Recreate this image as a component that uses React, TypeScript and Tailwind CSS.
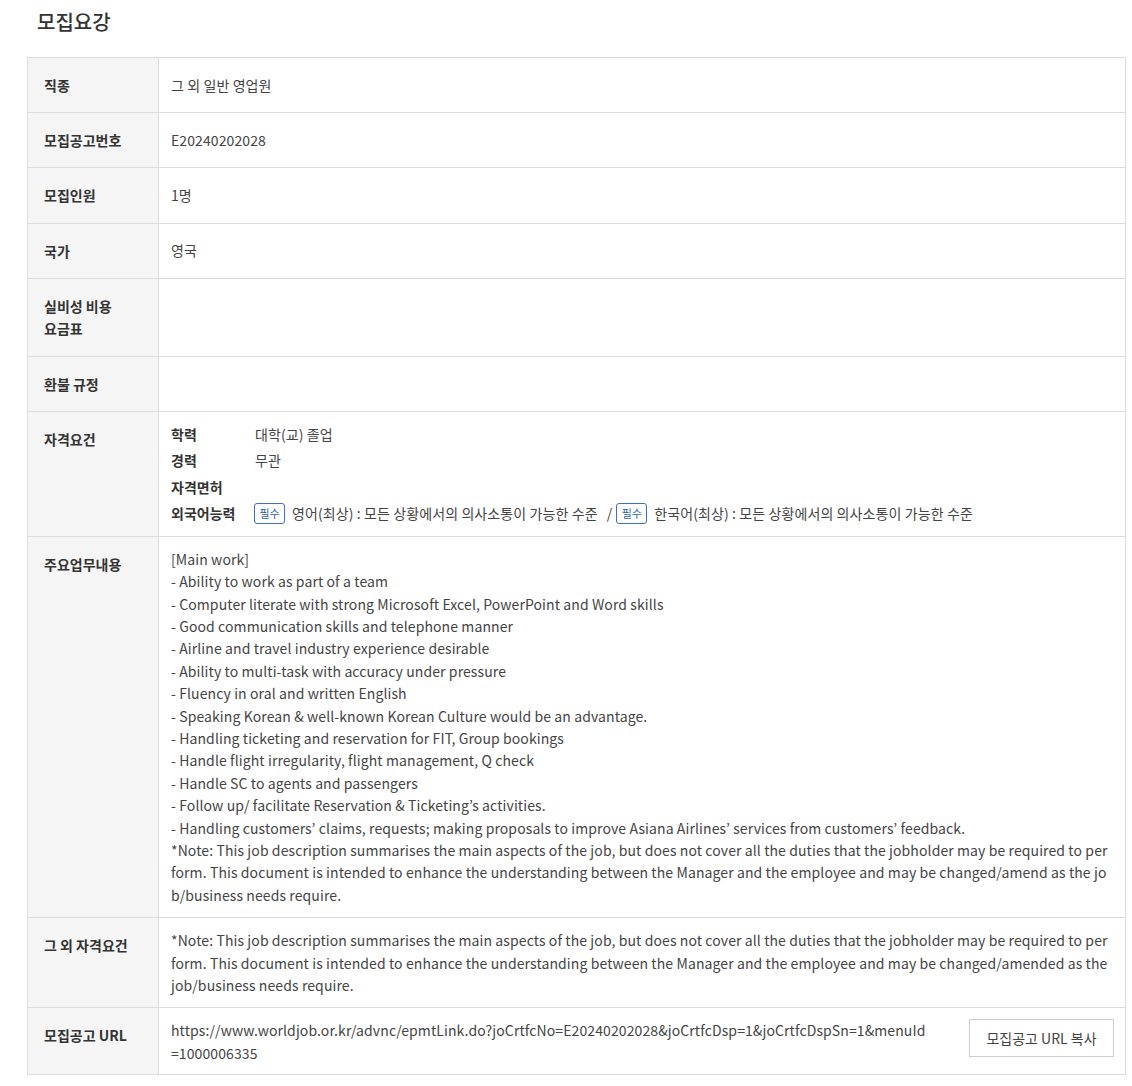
import React from "react";

const font = { fontFamily: '"Noto Sans CJK KR", "Noto Sans", sans-serif' };

function Row({ label, children, contentClass = "" }: { label: React.ReactNode; children?: React.ReactNode; contentClass?: string }) {
  return (
    <div className="flex border-b border-[#dcdcdc]">
      <div className="w-[131px] shrink-0 bg-[#f5f5f5] border-r border-[#dcdcdc] pl-[16px] pr-[8px] pt-[16px] pb-[15.6px] text-[14px] leading-[22.6px] font-bold text-[#333]">
        {label}
      </div>
      <div className={"flex-1 flex items-center px-[12px] text-[14px] leading-[22.4px] tracking-[0.1px] text-[#444] " + (contentClass || "py-[11px]")}>
        {children}
      </div>
    </div>
  );
}

function Badge() {
  return (
    <span className="inline-flex items-center justify-center h-[21px] w-[31px] border border-[#3f6fbf] rounded-[3px] text-[11px] leading-none tracking-normal text-[#2b5fb3] mr-[7px]">
      필수
    </span>
  );
}

const mainWork = [
  "[Main work]",
  "- Ability to work as part of a team",
  "- Computer literate with strong Microsoft Excel, PowerPoint and Word skills",
  "- Good communication skills and telephone manner",
  "- Airline and travel industry experience desirable",
  "- Ability to multi-task with accuracy under pressure",
  "- Fluency in oral and written English",
  "- Speaking Korean & well-known Korean Culture would be an advantage.",
  "- Handling ticketing and reservation for FIT, Group bookings",
  "- Handle flight irregularity, flight management, Q check",
  "- Handle SC to agents and passengers",
  "- Follow up/ facilitate Reservation & Ticketing’s activities.",
  "- Handling customers’ claims, requests; making proposals to improve Asiana Airlines’ services from customers’ feedback.",
  "*Note: This job description summarises the main aspects of the job, but does not cover all the duties that the jobholder may be required to per",
  "form. This document is intended to enhance the understanding between the Manager and the employee and may be changed/amend as the jo",
  "b/business needs require.",
];

const otherReq = [
  "*Note: This job description summarises the main aspects of the job, but does not cover all the duties that the jobholder may be required to per",
  "form. This document is intended to enhance the understanding between the Manager and the employee and may be changed/amended as the",
  "job/business needs require.",
];

function Lines({ lines }: { lines: string[] }) {
  return (
    <div className="flex flex-col">
      {lines.map((l, i) => (
        <div key={i} className="whitespace-nowrap">
          {l}
        </div>
      ))}
    </div>
  );
}

export default function App() {
  return (
    <div className="bg-white w-[1132px] min-h-[1086px]" style={font}>
      <div className="pl-[37px] pt-[8px] text-[20px] leading-[28px] font-medium text-[#333]">모집요강</div>
      <div className="ml-[27px] w-[1099px] mt-[21px] border-t border-l border-r border-[#dcdcdc]">
        <Row label="직종">그 외 일반 영업원</Row>
        <Row label="모집공고번호">E20240202028</Row>
        <Row label="모집인원">1명</Row>
        <Row label="국가">영국</Row>
        <Row label={<><div>실비성 비용</div><div>요금표</div></>} />
        <Row label="환불 규정" />
        <Row label="자격요건" contentClass="pt-[9px] pb-[9px]">
          <div className="flex flex-col self-start">
            {[
              ["학력", "대학(교) 졸업"],
              ["경력", "무관"],
              ["자격면허", ""],
            ].map(([k, v]) => (
              <div key={k} className="flex leading-[26.5px] h-[26.5px]">
                <span className="w-[84px] font-bold text-[#333] tracking-normal">{k}</span>
                <span>{v}</span>
              </div>
            ))}
            <div className="flex items-center leading-[26.5px] h-[26.5px] whitespace-nowrap">
              <span className="w-[83px] font-bold text-[#333] tracking-normal">외국어능력</span>
              <Badge />
              <span>영어(최상) : 모든 상황에서의 의사소통이 가능한 수준</span>
              <span className="ml-[9px] mr-[4px]">/</span>
              <Badge />
              <span>한국어(최상) : 모든 상황에서의 의사소통이 가능한 수준</span>
            </div>
          </div>
        </Row>
        <Row label="주요업무내용">
          <Lines lines={mainWork} />
        </Row>
        <Row label="그 외 자격요건" contentClass="pt-[11px] pb-[11px]">
          <Lines lines={otherReq} />
        </Row>
        <Row label="모집공고 URL" contentClass="pt-[11px] pb-[10px]">
          <div className="flex items-start justify-between w-full">
            <Lines lines={["https://www.worldjob.or.kr/advnc/epmtLink.do?joCrtfcNo=E20240202028&joCrtfcDsp=1&joCrtfcDspSn=1&menuId", "=1000006335"]} />
            <button className="w-[145px] h-[38px] mt-[0px] mr-[-1px] border border-[#cfcfcf] bg-white text-[14px] tracking-normal text-[#444]">
              모집공고 URL 복사
            </button>
          </div>
        </Row>
      </div>
    </div>
  );
}
